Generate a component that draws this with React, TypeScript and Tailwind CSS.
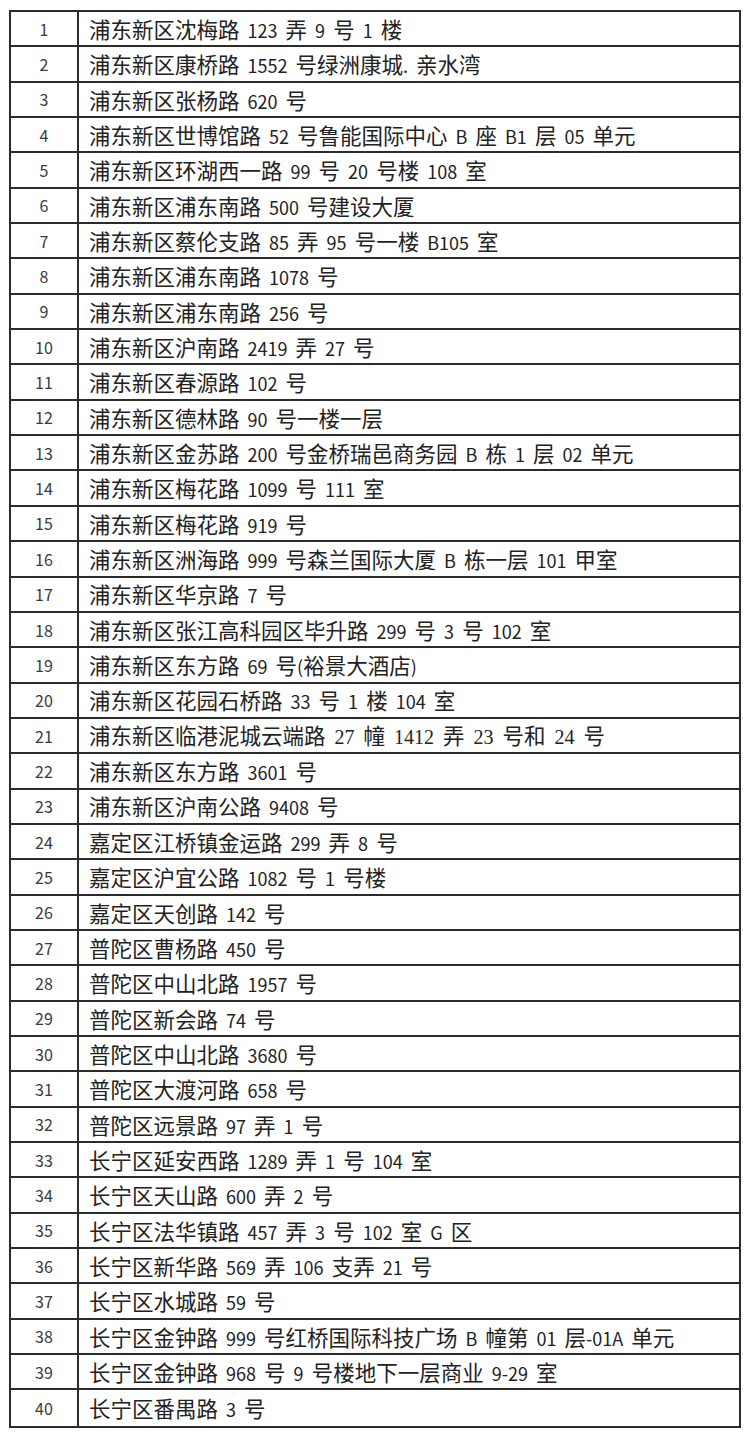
const ADDRESSES: string[] = [
  '浦东新区沈梅路 123 弄 9 号 1 楼',
  '浦东新区康桥路 1552 号绿洲康城. 亲水湾',
  '浦东新区张杨路 620 号',
  '浦东新区世博馆路 52 号鲁能国际中心 B 座 B1 层 05 单元',
  '浦东新区环湖西一路 99 号 20 号楼 108 室',
  '浦东新区浦东南路 500 号建设大厦',
  '浦东新区蔡伦支路 85 弄 95 号一楼 B105 室',
  '浦东新区浦东南路 1078 号',
  '浦东新区浦东南路 256 号',
  '浦东新区沪南路 2419 弄 27 号',
  '浦东新区春源路 102 号',
  '浦东新区德林路 90 号一楼一层',
  '浦东新区金苏路 200 号金桥瑞邑商务园 B 栋 1 层 02 单元',
  '浦东新区梅花路 1099 号 111 室',
  '浦东新区梅花路 919 号',
  '浦东新区洲海路 999 号森兰国际大厦 B 栋一层 101 甲室',
  '浦东新区华京路 7 号',
  '浦东新区张江高科园区毕升路 299 号 3 号 102 室',
  '浦东新区东方路 69 号(裕景大酒店)',
  '浦东新区花园石桥路 33 号 1 楼 104 室',
  '浦东新区临港泥城云端路 27 幢 1412 弄 23 号和 24 号',
  '浦东新区东方路 3601 号',
  '浦东新区沪南公路 9408 号',
  '嘉定区江桥镇金运路 299 弄 8 号',
  '嘉定区沪宜公路 1082 号 1 号楼',
  '嘉定区天创路 142 号',
  '普陀区曹杨路 450 号',
  '普陀区中山北路 1957 号',
  '普陀区新会路 74 号',
  '普陀区中山北路 3680 号',
  '普陀区大渡河路 658 号',
  '普陀区远景路 97 弄 1 号',
  '长宁区延安西路 1289 弄 1 号 104 室',
  '长宁区天山路 600 弄 2 号',
  '长宁区法华镇路 457 弄 3 号 102 室 G 区',
  '长宁区新华路 569 弄 106 支弄 21 号',
  '长宁区水城路 59 号',
  '长宁区金钟路 999 号红桥国际科技广场 B 幢第 01 层-01A 单元',
  '长宁区金钟路 968 号 9 号楼地下一层商业 9-29 室',
  '长宁区番禺路 3 号',
];

// row 21 was typed with a serif latin font in the source document
const SERIF_ROWS = new Set([20]);

// Split into CJK runs and half-width runs; the latter render smaller, like the
// half-width digits of the original document font.
function Address({ text, serif }: { text: string; serif: boolean }) {
  const parts = text.split(/([\u4e00-\u9fff]+)/).filter(Boolean);
  return (
    <>
      {parts.map((p, i) =>
        /[\u4e00-\u9fff]/.test(p) ? (
          <span key={i} className="text-[21.5px]">
            {p}
          </span>
        ) : serif ? (
          <span
            key={i}
            className="font-['Liberation_Serif',serif] text-[20px] [word-spacing:4px] whitespace-pre"
          >
            {p}
          </span>
        ) : (
          <span key={i} className="text-[18px] [word-spacing:4px] whitespace-pre">
            {p}
          </span>
        ),
      )}
    </>
  );
}

export default function App() {
  return (
    <div className="w-[750px] h-[1439px] bg-white pt-[10px] pl-[9px] font-['Noto_Sans_CJK_SC',sans-serif] text-[#222]">
      <div className="w-[732px] border-2 border-[#2b2b2b]">
        {ADDRESSES.map((addr, i) => (
          <div
            key={i}
            className={`flex h-[35.35px] ${i < ADDRESSES.length - 1 ? 'border-b-2 border-[#2b2b2b]' : ''}`}
          >
            <div className="w-[68px] shrink-0 border-r-2 border-[#2b2b2b] flex items-center justify-center text-[16px] text-[#3a3a3a]">
              {i + 1}
            </div>
            <div className="flex items-center pl-[10px] leading-none whitespace-nowrap">
              <span>
                <Address text={addr} serif={SERIF_ROWS.has(i)} />
              </span>
            </div>
          </div>
        ))}
      </div>
    </div>
  );
}
